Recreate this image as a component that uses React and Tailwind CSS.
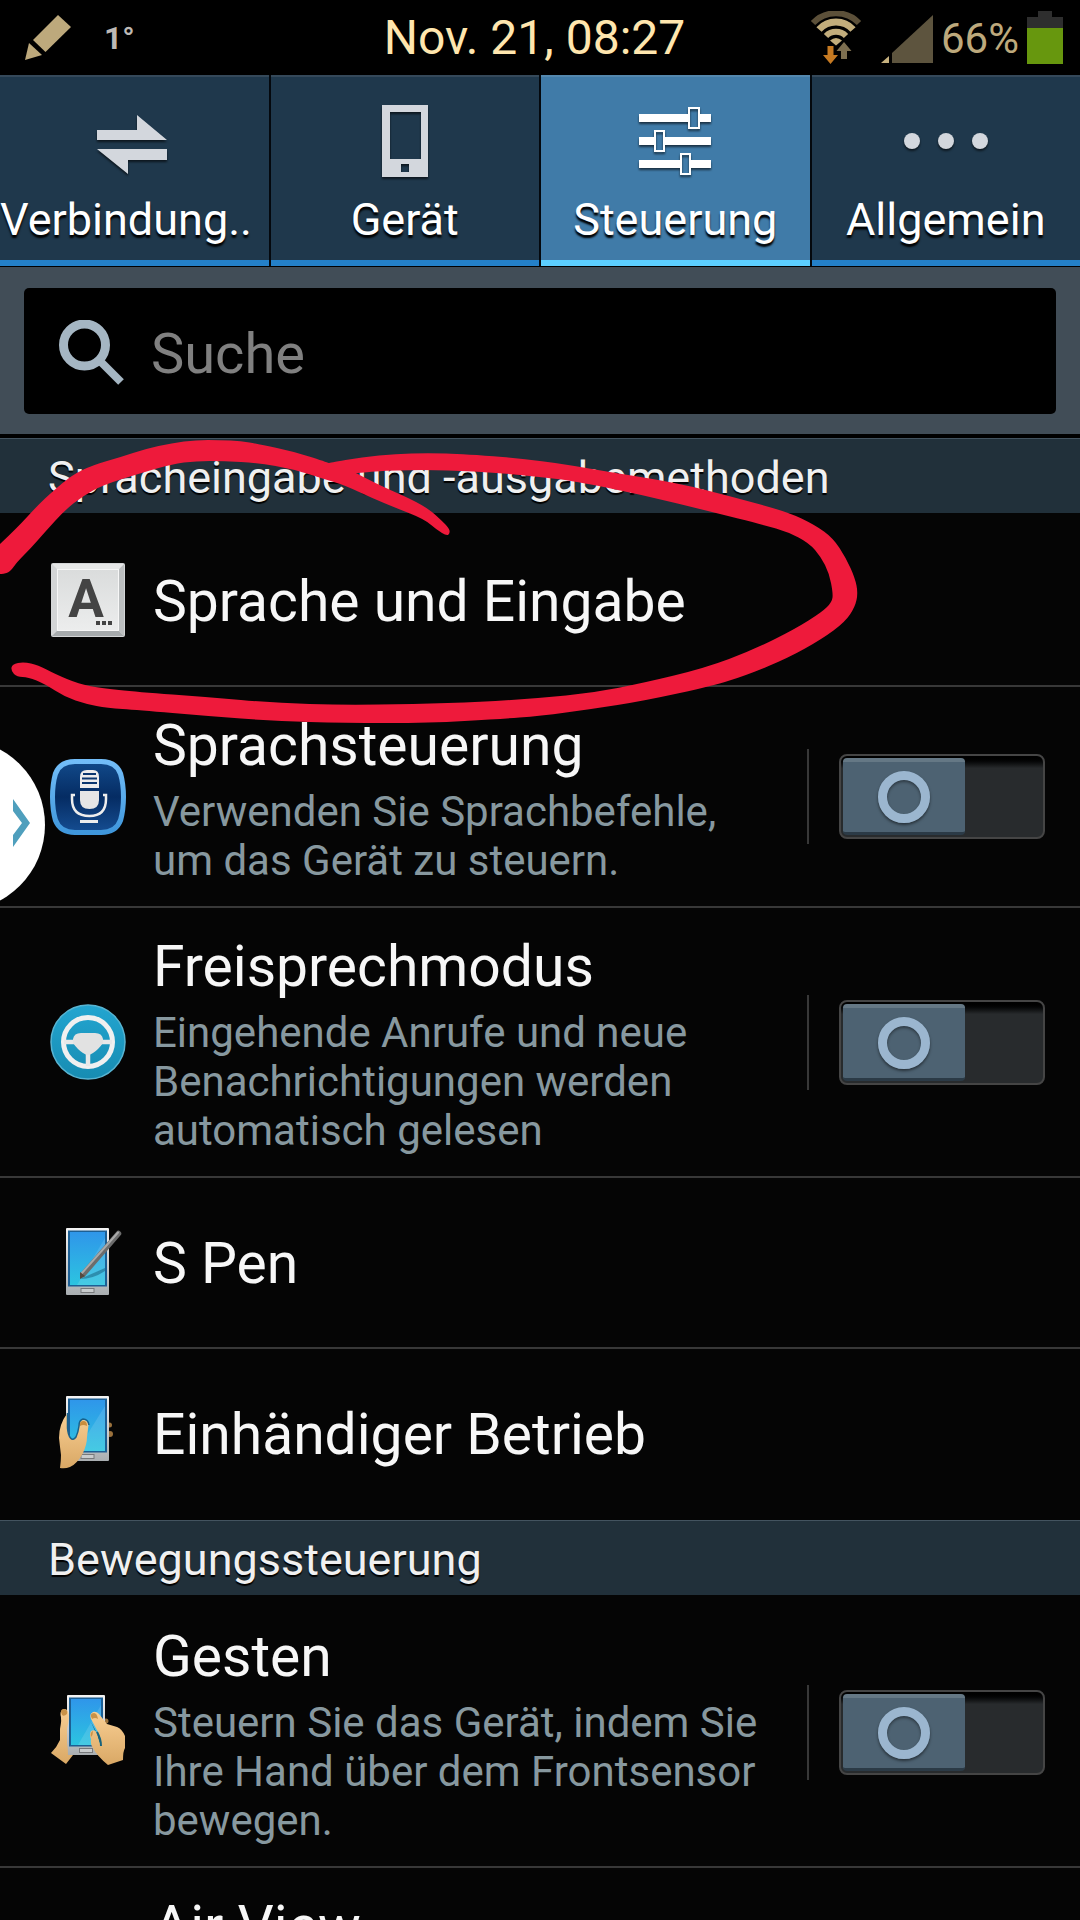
import React, { useState } from "react";

const tabs = [
  { id: "connections", label: "Verbindung..", shortened: true },
  { id: "device", label: "Gerät" },
  { id: "controls", label: "Steuerung" },
  { id: "general", label: "Allgemein" },
];

const sections = [
  {
    title: "Spracheingabe und -ausgabemethoden",
    items: [
      { id: "language", title: "Sprache und Eingabe" },
      {
        id: "voice",
        title: "Sprachsteuerung",
        description: "Verwenden Sie Sprachbefehle, um das Gerät zu steuern.",
      },
      {
        id: "handsfree",
        title: "Freisprechmodus",
        description:
          "Eingehende Anrufe und neue Benachrichtigungen werden automatisch gelesen",
      },
      { id: "spen", title: "S Pen" },
      { id: "onehand", title: "Einhändiger Betrieb" },
    ],
  },
  {
    title: "Bewegungssteuerung",
    items: [
      {
        id: "gestures",
        title: "Gesten",
        description:
          "Steuern Sie das Gerät, indem Sie Ihre Hand über dem Frontsensor bewegen.",
      },
      {
        id: "airview",
        title: "Air View",
        description: "Zeigen Sie auf ein Element, um eine Vorschau zu sehen.",
      },
    ],
  },
];

// Outline of the freehand marker, clockwise from the left screen edge
const markerPoints = [
  [0, 544], [17, 528], [38, 505], [52, 492], [72, 475], [93, 465], [121, 457],
  [145, 449], [172, 443], [196, 440], [220, 440], [241, 441], [258, 444],
  [296, 452], [329, 463], [329, 463], [362, 457], [396, 454], [427, 453],
  [465, 454], [540, 460], [609, 472], [678, 483], [733, 497], [788, 512],
  [815, 525], [833, 538], [846, 558], [855, 578], [858, 593], [855, 607],
  [845, 622], [822, 639], [788, 658], [747, 675], [712, 686], [643, 701],
  [592, 709], [540, 716], [499, 719], [430, 723], [344, 723], [275, 721],
  [207, 716], [138, 710], [107, 708], [86, 704], [65, 697], [45, 684],
  [28, 677], [17, 677], [11, 671], [12, 664], [24, 662], [38, 665], [55, 674],
  [79, 684], [100, 688], [138, 692], [207, 697], [275, 703], [344, 705],
  [413, 704], [482, 702], [540, 698], [592, 693], [643, 683], [705, 668],
  [753, 650], [795, 629], [822, 612], [832, 602], [833, 593], [829, 573],
  [821, 557], [809, 543], [788, 532], [764, 525], [712, 512], [643, 495],
  [574, 481], [540, 477], [499, 473], [448, 470], [396, 470], [356, 473],
  [356, 473], [379, 485], [413, 500], [430, 510], [441, 520], [449, 528],
  [450, 533], [447, 536], [437, 530], [424, 519], [396, 508], [372, 498],
  [344, 485], [327, 480], [293, 469], [258, 463], [224, 461], [196, 461],
  [172, 464], [138, 474], [103, 485], [83, 496], [65, 510], [45, 532],
  [31, 548], [17, 562], [10, 572], [3, 574], [0, 574],
];

const smoothPath = (points) => {
  let d = `M${points[0][0]} ${points[0][1]}`;
  for (let i = 1; i < points.length - 1; i++) {
    const [x, y] = points[i];
    const [nx, ny] = points[i + 1];
    d += `Q${x} ${y} ${(x + nx) / 2} ${(y + ny) / 2}`;
  }
  const last = points[points.length - 1];
  return `${d}L${last[0]} ${last[1]}Z`;
};

const PencilIcon = () => (
  <svg width="48" height="46" viewBox="24 15 48 46" fill="#bda97c">
    <path d="M58 15L71 27L45.500 52L33 40Z" />
    <path d="M29 43L42 55L25 60Z" />
  </svg>
);

const WifiIcon = () => (
  <svg width="52" height="54" viewBox="810 10 52 54" fill="none">
    <path d="M813 22A32 32 0 0 1 859 22" stroke="#5c5039" strokeWidth="6" />
    <path d="M819 28.500A23 23 0 0 1 853 28.500" stroke="#c2ad7c" strokeWidth="7" />
    <path d="M826 35A14 14 0 0 1 846 35" stroke="#c2ad7c" strokeWidth="6" />
    <path d="M830 39.500Q836 34.500 842 39.500L836 44.500Z" fill="#c2ad7c" />
    <path d="M827.500 45H833.500V54H838L830.500 63L823 54H827.500Z" fill="#c67a22" />
    <path d="M844 41L851.500 50H847V58H841V50H836.500Z" fill="#7d6f50" />
  </svg>
);

const SignalIcon = () => (
  <svg width="52" height="48" viewBox="881 15 52 48">
    <path d="M933 15V63H892V53Z" fill="#5d543e" />
    <path d="M889 56V63H881Z" fill="#c7b27f" />
  </svg>
);

const BatteryIcon = () => (
  <svg width="36" height="53" viewBox="0 0 36 53">
    <path d="M11 0H25V6H36V17H0V6H11Z" fill="#2e2e2e" />
    <path d="M0 17H36V53H0Z" fill="#67970e" />
  </svg>
);

const TabIcon = ({ id }) => (
  <svg
    width="74"
    height="74"
    viewBox="0 0 74 74"
    fill="#d3d7dd"
    className="overflow-visible drop-shadow-[0_2px_1px_rgba(0,0,0,0.6)]"
  >
    {id === "connections" && (
      <>
        <path d="M0 25H40V10L70 35H0Z" />
        <path d="M0 44H70V55H31V69Z" />
      </>
    )}
    {id === "device" && (
      <path
        fillRule="evenodd"
        d="M14 0H60V72H14ZM22 7V54H53V7ZM33 59V67H41V59Z"
      />
    )}
    {id === "controls" && (
      <g fill="#ffffff">
        <path d="M1 9H51V17H1ZM61 9H73V17H61Z" />
        <path d="M1 32H16V40H1ZM27 32H73V40H27Z" />
        <path d="M1 55H42V63H1ZM53 55H73V63H53Z" />
        <g fill="none" stroke="#ffffff" strokeWidth="2">
          <rect x="51" y="3" width="10" height="20" />
          <rect x="17" y="26" width="9" height="20" />
          <rect x="43" y="49" width="9" height="20" />
        </g>
      </g>
    )}
    {id === "general" && (
      <>
        <circle cx="3" cy="36" r="8" />
        <circle cx="37" cy="36" r="8" />
        <circle cx="71" cy="36" r="8" />
      </>
    )}
  </svg>
);

const SearchIcon = () => (
  <svg width="66" height="66" viewBox="0 0 66 66" fill="none" stroke="#a5b6c3">
    <circle cx="25.500" cy="25" r="21" strokeWidth="9" />
    <path d="M40 40L62 62" strokeWidth="8" />
  </svg>
);

const MiniPhone = ({ x, y, width, height }) => (
  <>
    <rect x={x} y={y} width={width} height={height} rx="1" fill="url(#phoneBody)" />
    <rect x={x + 2} y={y + 2.5} width={width - 4} height={height - 11} fill="#1c5f94" />
    <rect x={x + 4} y={y + 4} width={width - 8} height={height - 14} fill="url(#phoneScreen)" />
    <path
      d={`M${x + width - 4} ${y + 10}V${y + height - 10}H${x + 11}Z`}
      fill="#ffffff"
      opacity="0.12"
    />
    <rect
      x={x + width / 2 - 6.5}
      y={y + height - 6.5}
      width="13"
      height="4"
      fill="#c9cccd"
      stroke="#77797b"
    />
  </>
);

const ItemIcon = ({ id }) => (
  <svg width="76" height="76" viewBox="-1 -1 76 76" className="shrink-0">
    <defs>
      <linearGradient id="phoneBody" x1="0" y1="0" x2="0" y2="1">
        <stop offset="0" stopColor="#f4f4f4" />
        <stop offset="1" stopColor="#a9aeb1" />
      </linearGradient>
      <linearGradient id="phoneScreen" x1="0" y1="0" x2="0" y2="1">
        <stop offset="0" stopColor="#2f96ea" />
        <stop offset="1" stopColor="#2cc4e0" />
      </linearGradient>
      <linearGradient id="skin" x1="0" y1="0" x2="0" y2="1">
        <stop offset="0" stopColor="#f9cf94" />
        <stop offset="1" stopColor="#d9a865" />
      </linearGradient>
      <linearGradient id="keyFace" x1="0" y1="0" x2="0" y2="1">
        <stop offset="0" stopColor="#dadcdc" />
        <stop offset="1" stopColor="#eceded" />
      </linearGradient>
      <linearGradient id="micFace" x1="0" y1="0" x2="0" y2="1">
        <stop offset="0" stopColor="#124b8c" />
        <stop offset="0.5" stopColor="#052c63" />
        <stop offset="1" stopColor="#164f94" />
      </linearGradient>
      <linearGradient id="micRim" x1="0" y1="0" x2="0" y2="1">
        <stop offset="0" stopColor="#72bdf8" />
        <stop offset="1" stopColor="#3f97dc" />
      </linearGradient>
      <linearGradient id="wheelFace" x1="0" y1="0" x2="0" y2="1">
        <stop offset="0" stopColor="#23a5d0" />
        <stop offset="1" stopColor="#178cb2" />
      </linearGradient>
    </defs>
    {id === "language" && (
      <>
        <rect width="74" height="74" rx="2" fill="#d3d5d6" />
        <path d="M1 73L7 67H67L73 73Z" fill="#a7abad" />
        <path d="M73 1V73L67 67V7Z" fill="#bcbfc0" />
        <path d="M1 1H73L67 7H7Z" fill="#e6e7e7" />
        <rect x="6.500" y="6.500" width="61" height="61" fill="url(#keyFace)" stroke="#f7f7f7" />
        <text
          x="35"
          y="54"
          textAnchor="middle"
          fontFamily="Roboto, sans-serif"
          fontWeight="700"
          fontSize="53"
          fill="#444444"
        >
          A
        </text>
        <path d="M45 58H49V62H45ZM51 58H55V62H51ZM57 58H61V62H57Z" fill="#444444" />
      </>
    )}
    {id === "voice" && (
      <>
        <path
          d="M24 0H50Q66 0 71 13Q74 24 74 37Q74 50 71 61Q66 74 50 74H24Q8 74 3 61Q0 50 0 37Q0 24 3 13Q8 0 24 0Z"
          fill="url(#micFace)"
          stroke="url(#micRim)"
          strokeWidth="2"
        />
        <path
          d="M24 2H50Q65 2 69 14Q72 24 72 37Q72 50 69 60Q65 72 50 72H24Q9 72 5 60Q2 50 2 37Q2 24 5 14Q9 2 24 2Z"
          fill="none"
          stroke="url(#micRim)"
          strokeWidth="4"
        />
        <path d="M29 28V17Q29 10 36 10H42Q48 10 48 17V28Z" fill="#ededed" />
        <path d="M32 14H45M31 18.500H46M31 23H46" stroke="#0b3770" strokeWidth="2" />
        <path d="M29 31H48V40Q48 49 38.500 49Q29 49 29 40Z" fill="#e6e6e6" />
        <path
          d="M24 35H21V39Q21 56 38.500 56Q55 56 55 39V35H52"
          fill="none"
          stroke="#ededed"
          strokeWidth="2.500"
        />
        <path d="M29 61.500H47" stroke="#ededed" strokeWidth="3" />
      </>
    )}
    {id === "handsfree" && (
      <>
        <circle cx="37" cy="37" r="37" fill="url(#wheelFace)" stroke="#58b4d2" strokeWidth="1.500" />
        <circle cx="37" cy="37" r="24.500" fill="none" stroke="#f0f0f0" strokeWidth="5" />
        <path d="M13 37H61M37 45V61" stroke="#e8e8e8" strokeWidth="4.500" />
        <path
          d="M22 34Q23 28 30 28H44Q51 28 52 34V38Q47 45 42 48Q39 50 37 50Q35 50 32 48Q27 45 22 38Z"
          fill="#e2e2e2"
        />
      </>
    )}
    {id === "spen" && (
      <>
        <MiniPhone x={15} y={3} width={43} height={67} />
        <path d="M29 54L54 43V46Q42 54 29 54Z" fill="#145a7a" opacity="0.5" />
        <path d="M32 49.500L67.500 8.500" stroke="#6c6c6c" strokeWidth="5.500" strokeLinecap="round" />
        <path d="M31 48L67 7.500" stroke="#a9a9a9" strokeWidth="2" strokeLinecap="round" />
        <path d="M29 47L34 51L29 54Z" fill="#56493f" />
      </>
    )}
    {id === "onehand" && (
      <>
        <circle cx="58.500" cy="29" r="2.500" fill="#9a713c" />
        <circle cx="59" cy="38" r="3" fill="#9a713c" />
        <MiniPhone x={15} y={0} width={43} height={65} />
        <path
          d="M16.500 17Q8 28 8 42Q9 51 10 59Q10 65 9 72Q14 73 19 71Q26 68 32 57Q36 48 36 41L37.500 29Q37 24 32 24Q28 24 28 30Q27 37 25 41Q22 45 19.500 42Q17 39 16.500 32Z"
          fill="url(#skin)"
        />
        <path
          d="M16.500 17V32Q17 39 19.500 42Q22 45 25 41Q27 37 28 30Q28 24 32 23Q37 23 38 29"
          fill="none"
          stroke="#19618a"
          strokeWidth="1.500"
        />
        <path d="M29 28Q29 25 32.500 25Q36 25 36 30Q32 28 29 30Z" fill="#c98d3d" />
      </>
    )}
    {(id === "gestures" || id === "airview") && (
      <>
        <circle cx="55" cy="26" r="2.500" fill="#9a713c" />
        <MiniPhone x={16} y={0} width={38} height={60} />
        <path
          d="M13 14Q9 15 9.500 20Q11 24 9 34V45Q6 52 0 58L15 69L22 60H17Q17 54 16 48V34Q19 22 17 17Q16 14 13 14Z"
          fill="url(#skin)"
        />
        <path d="M10 17Q10 14 13 14Q17 14 16 19Q13 22 11 20Z" fill="#c99248" />
        <path d="M40 27L48 42L50 51L44 36Z" fill="#10617f" />
        <path
          d="M42 17Q38 19 40 24L47 37Q51 45 50 51Q48 47 46 38Q44 34 40 36Q38 39 40 44Q39 49 42 53Q46 61 57 70L72 65Q72 56 74 53V41Q71 34 66 32L56 29L48 19Q45 16 42 17Z"
          fill="url(#skin)"
        />
        <path d="M50 51Q50 44 46 37" fill="none" stroke="#17627c" strokeWidth="2" />
        <path d="M41 24Q38 18 43 18Q46 18 47 24Q44 22 41 24ZM40 42Q39 37 42 36Q42 40 40 42Z" fill="#c99248" />
      </>
    )}
  </svg>
);

const Toggle = ({ labelledBy }) => (
  <span className="relative block h-[85px] w-[206px] shrink-0">
    <input
      type="checkbox"
      aria-labelledby={labelledBy}
      className="peer block size-full appearance-none rounded-lg border-2 border-[#454545] bg-linear-to-b from-black to-[#282b2d] to-15%"
    />
    <span className="pointer-events-none absolute top-1 left-1 flex h-[77px] w-[122px] items-center justify-center rounded border-t-4 border-b-3 border-t-[#657885] border-b-[#2b3a46] bg-[#4d6272] peer-checked:translate-x-[75px]">
      <span className="size-[52px] rounded-full border-9 border-[#9bb6cf] shadow-[0_2px_3px_rgba(0,0,0,0.5),inset_0_2px_3px_rgba(0,0,0,0.4)]" />
    </span>
  </span>
);

const SettingsRow = ({ item }) => {
  if (!item.description) {
    return (
      <li className="border-b-2 border-[#383838] last:border-transparent">
        <a href="#" className="flex items-center gap-[27px] px-[50px] pt-[46px] pb-[47px]">
          <ItemIcon id={item.id} />
          <span className="pt-1 text-[57px] leading-[66px]">{item.title}</span>
        </a>
      </li>
    );
  }

  return (
    <li className="flex items-center border-b-2 border-[#383838] pr-[35px] pl-[50px]">
      <ItemIcon id={item.id} />
      <div className="ml-[27px] min-w-0 flex-1 pt-[26px] pr-[28px] pb-[21px]">
        <h3 id={item.id} className="text-[57px] leading-[66px]">
          {item.title}
        </h3>
        <p className="mt-2 text-[42px] leading-[49px] text-[#87989f]">{item.description}</p>
      </div>
      <div className="flex shrink-0 items-center border-l-2 border-[#383838] py-[5px] pl-[30px]">
        <Toggle labelledBy={item.id} />
      </div>
    </li>
  );
};

const App = () => {
  const [activeTab, setActiveTab] = useState("controls");
  const [query, setQuery] = useState("");

  return (
    <div className="relative flex h-screen flex-col overflow-hidden bg-[#050505] font-['Roboto',sans-serif] text-[#f7f7f7]">
      {/* Status bar */}
      <header className="grid h-[75px] shrink-0 grid-cols-[1fr_auto_1fr] items-center bg-black pr-[17px] pl-1.5">
        <div className="flex items-center gap-8 pl-[18px]">
          <PencilIcon />
          <span className="text-[32px] leading-8 font-bold text-[#bdb9b5]">1°</span>
        </div>
        <span className="text-[48px] leading-[56px] text-[#ffe6ae]">Nov. 21, 08:27</span>
        <div className="flex items-center justify-end">
          <WifiIcon />
          <span className="ml-[19px] pt-0.5">
            <SignalIcon />
          </span>
          <span className="mx-2 pt-0.5 text-[42px] leading-[49px] text-[#bda97c]">66%</span>
          <BatteryIcon />
        </div>
      </header>

      <nav className="grid shrink-0 grid-cols-4 gap-0.5 border-b border-black bg-[#04080d]">
        {tabs.map((tab) => (
          <button
            key={tab.id}
            type="button"
            onClick={() => setActiveTab(tab.id)}
            className={`flex min-w-0 flex-col items-center border-t-2 border-b-6 pt-7 pb-[13px] text-[45px] leading-[54px] text-white [text-shadow:0_3px_2px_#000] ${
              activeTab === tab.id
                ? "border-t-[#5488ae] border-b-[#5ccfff] bg-[#407ba8]"
                : "border-t-[#35495a] border-b-[#2480c8] bg-[#1f384c]"
            }`}
          >
            <TabIcon id={tab.id} />
            <span
              className={`mt-3.5 max-w-full whitespace-nowrap ${
                tab.shortened ? "self-start" : ""
              }`}
            >
              {tab.label}
            </span>
          </button>
        ))}
      </nav>

      {/* Search */}
      <div className="shrink-0 border-b-4 border-black bg-[#414d57] px-6 pt-[21px] pb-5">
        <label className="flex h-[126px] items-center gap-[26px] rounded-[5px] bg-black pt-[3px] pl-[35px]">
          <SearchIcon />
          <input
            type="text"
            aria-label="Suche"
            placeholder="Suche"
            value={query}
            onChange={(e) => setQuery(e.target.value)}
            className="h-full min-w-0 flex-1 bg-transparent pt-[3px] text-[56px] outline-none placeholder:text-[#808080]"
          />
        </label>
      </div>

      <main className="min-h-0 flex-1 overflow-hidden">
        {sections.map((section) => (
          <section key={section.title}>
            <h2 className="border-t border-[#43535f] bg-[#21303a] px-12 pt-3 pb-2 text-[45px] leading-[54px] text-[#f0f0f0] [text-shadow:0_2px_1px_#000]">
              {section.title}
            </h2>
            <ul className="pt-[3px]">
              {section.items.map((item) => (
                <SettingsRow key={item.id} item={item} />
              ))}
            </ul>
          </section>
        ))}
      </main>

      {/* Edge panel handle */}
      <button
        type="button"
        aria-label="Multi Window"
        className="absolute top-[749px] left-0 h-[152px] w-[46px]"
      >
        <svg width="46" height="152" viewBox="0 0 46 152">
          <circle cx="-41" cy="76" r="86" fill="#ffffff" />
          <path d="M13 50L30 74L13 98V86L22 74L13 62Z" fill="#4f9fbd" />
        </svg>
      </button>

      {/* Marker drawn over the list */}
      <svg
        width="860"
        height="290"
        viewBox="0 436 860 290"
        className="pointer-events-none absolute top-[436px] left-0"
      >
        <path d={smoothPath(markerPoints)} fill="#ee1a3b" />
      </svg>
    </div>
  );
};

export default App;
